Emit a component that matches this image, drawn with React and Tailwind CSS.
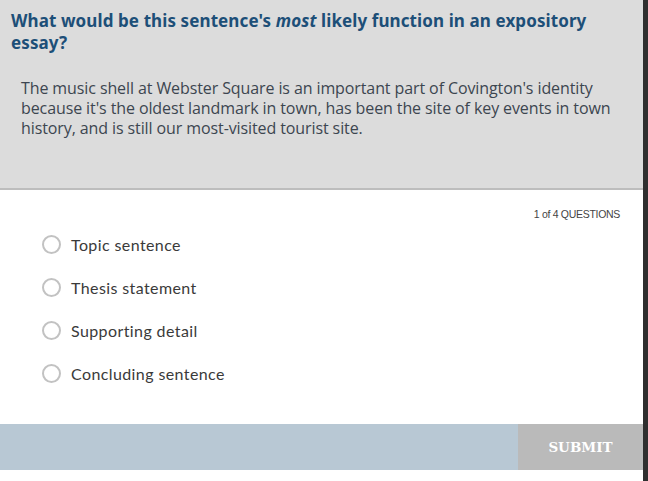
const options = ['Topic sentence', 'Thesis statement', 'Supporting detail', 'Concluding sentence'];

export default function App() {
  return (
    <div className="flex w-[648px] h-[481px] bg-[#2f2f2f] overflow-hidden">
      <div className="flex flex-col w-[643px] h-full bg-white">
        <div className="h-[190px] bg-[#dcdcdc] border-b-2 border-[#bdbdbd] pt-[10px] px-[11px]">
          <h1 className="text-[17px] leading-[22px] font-bold text-[#1d4f78] font-['Noto_Sans',sans-serif] tracking-[0.1px]">
            What would be this sentence's <em>most</em> likely function in an expository essay?
          </h1>
          <p className="mt-[24px] pl-[10px] pr-[20px] text-[16px] leading-[20px] text-[#3c4650] font-['Open_Sans',sans-serif] tracking-[-0.1px]">
            The music shell at Webster Square is an important part of Covington's identity because it's the oldest landmark in town, has been the site of key events in town history, and is still our most-visited tourist site.
          </p>
        </div>
        <div className="flex flex-col flex-1">
          <div className="flex justify-end pr-[23px] pt-[18px] text-[10.5px] leading-[13px] text-[#444] font-['Liberation_Sans',Arial,sans-serif] tracking-[-0.3px]">
            1 of 4 QUESTIONS
          </div>
          <div className="flex flex-col gap-[25px] pl-[42px] pt-[14px]">
            {options.map(o => (
              <label key={o} className="flex items-center gap-[10px] h-[18px] cursor-pointer">
                <span className="w-[19px] h-[19px] rounded-full border-2 border-[#c2c2c2] bg-white shrink-0" />
                <span className="text-[16px] text-[#3a3a3a] font-['Lato',sans-serif] tracking-[0.4px] mt-[2px]">{o}</span>
              </label>
            ))}
          </div>
          <div className="flex mt-auto mb-[11px] h-[46px]">
            <div className="flex-1 bg-[#b8c8d4]" />
            <button className="w-[125px] bg-[#bababa] text-white text-[13.5px] font-bold font-['DejaVu_Serif',serif]">
              SUBMIT
            </button>
          </div>
        </div>
      </div>
    </div>
  );
}
